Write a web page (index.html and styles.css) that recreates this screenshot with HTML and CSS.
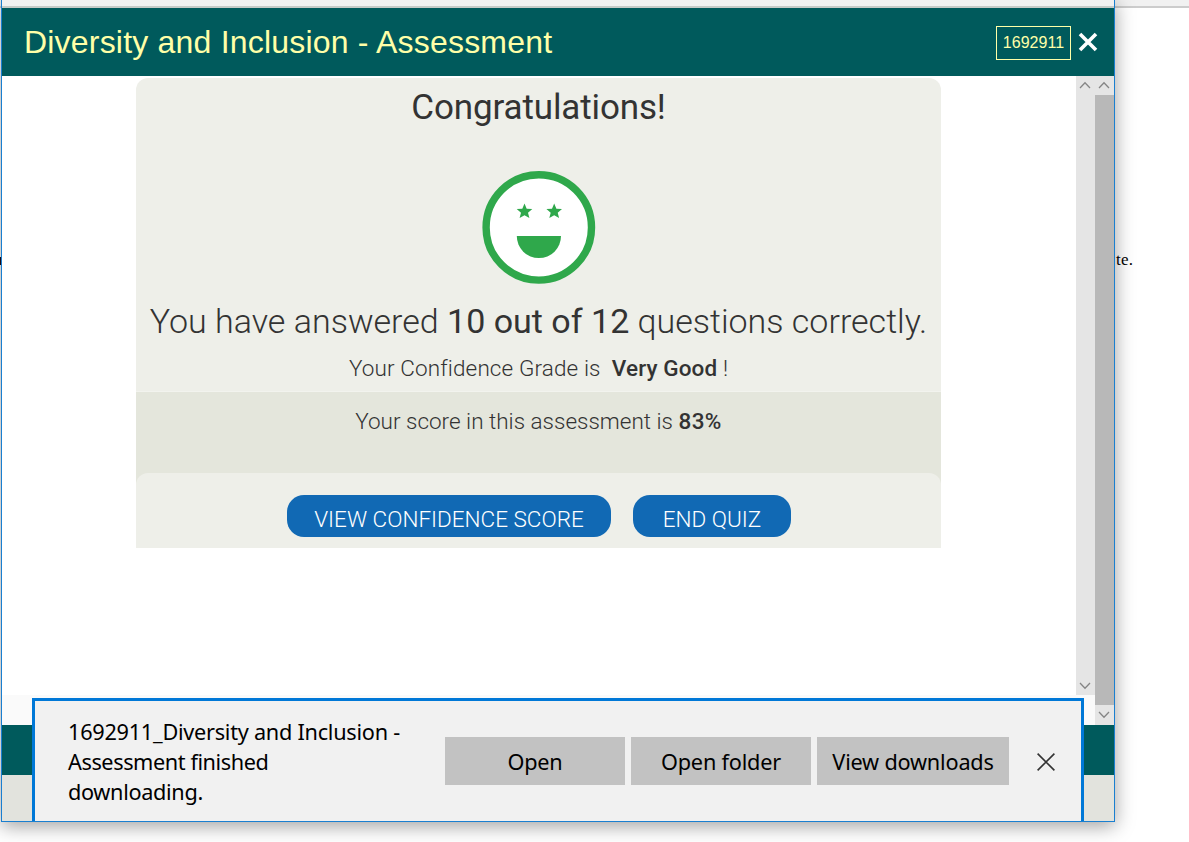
FILE: index.html
```html
<!DOCTYPE html>
<html lang="en">
<head>
<meta charset="utf-8">
<title>Diversity and Inclusion - Assessment</title>
<link rel="stylesheet" href="styles.css">
</head>
<body>
<div class="backdrop"><span class="backdrop-edge"></span><span class="backdrop-text">te.</span></div>
<div class="window">
  <div class="window-strip"></div>
  <header class="header">
    <h1 class="title"><span>Diversity and Inclusion - Assessment</span></h1>
    <div class="badge"><span>1692911</span></div>
    <svg class="header-close" width="20" height="20" viewBox="0 0 20 20"><path d="M2 2L18 18M18 2L2 18"/></svg>
  </header>
  <div class="viewport">
    <div class="frame">
      <div class="page">
        <main class="content">
          <section class="card">
            <h2 class="congrats"><span>Congratulations!</span></h2>
            <svg class="smiley" width="114" height="114" viewBox="0 0 114 114">
              <circle cx="56.8" cy="57.4" r="52.7" fill="#fff" stroke="#2fa84b" stroke-width="7.4"/>
              <path id="star" fill="#2fa84b" d="M42.5 33.5L44.7 38.7L50.3 39.1L46 42.7L47.4 48L42.5 45.2L37.6 48L39 42.7L34.7 39.1L40.3 38.7Z"/>
              <use href="#star" x="29.7"/>
              <path fill="#2fa84b" d="M34.8 66H79A22.1 22.1 0 0 1 34.8 66Z"/>
            </svg>
            <p class="answered"><span>You have answered <b>10 out of 12</b> questions correctly.</span></p>
            <p class="grade"><span>Your Confidence Grade is&nbsp; <b>Very Good</b> !</span></p>
            <div class="score"><span>Your score in this assessment is <b>83%</b></span></div>
            <div class="actions-wrap">
              <div class="actions">
                <button class="action action-view"><span>VIEW CONFIDENCE SCORE</span></button>
                <button class="action action-end"><span>END QUIZ</span></button>
              </div>
            </div>
          </section>
        </main>
        <div class="scrollbar">
          <svg width="12" height="8" viewBox="0 0 12 8"><path d="M1 7L6 1.8L11 7"/></svg>
          <svg width="12" height="8" viewBox="0 0 12 8"><path d="M1 1L6 6.2L11 1"/></svg>
        </div>
      </div>
      <div class="gap"></div>
    </div>
    <div class="scrollbar scrollbar-outer">
      <svg width="12" height="8" viewBox="0 0 12 8"><path d="M1 7L6 1.8L11 7"/></svg>
      <div class="thumb"></div>
      <svg width="12" height="8" viewBox="0 0 12 8"><path d="M1 1L6 6.2L11 1"/></svg>
    </div>
  </div>
  <div class="footer-bar"></div>
  <div class="footer-base"></div>
  <div class="toast">
    <p class="message"><span class="m1">1692911_Diversity and Inclusion -</span><br><span class="m2">Assessment finished</span><br><span class="m3">downloading.</span></p>
    <div class="toast-buttons">
      <button class="toast-button"><span>Open</span></button>
      <button class="toast-button"><span>Open folder</span></button>
      <button class="toast-button toast-wide"><span>View downloads</span></button>
    </div>
    <svg class="toast-close" width="20" height="20" viewBox="0 0 20 20"><path d="M1.6 1.6L18.4 18.4M18.4 1.6L1.6 18.4"/></svg>
  </div>
</div>
</body>
</html>
```
FILE: styles.css
```css
* { box-sizing: border-box; }
body { margin: 0; width: 1189px; height: 842px; overflow: hidden; background: #fff; position: relative; }
h1, h2, p { margin: 0; font-weight: 400; }
button { border: 0; padding: 0; }
svg { display: block; flex: none; }

.backdrop { height: 842px; background: linear-gradient(#f1f1f1 6px, #ccc 6px, #ccc 8px, #fff 8px); padding-top: 250px; display: flex; align-items: flex-start; }
.backdrop-edge { width: 1px; height: 8px; margin: 7px 1115px 0 0; background: #200a18; }
.backdrop-text { font: 17px/20px "Liberation Serif", serif; color: #000; letter-spacing: .2px; }

.window { position: absolute; left: 1px; top: -1px; width: 1114px; height: 823px; border: 1px solid #1a7fd0; background: #fff; display: flex; flex-direction: column; box-shadow: 0 4px 18px rgba(0,0,0,.38); }
.window-strip { height: 8px; flex: none; background: #f1f1f1; border-bottom: 2px solid #c6cbc8; }
.header { height: 68px; flex: none; background: #005a5c; display: flex; align-items: center; padding: 0 16px 0 22px; }
.title { flex: 1; font: 32px/40px "Liberation Sans", Arial, sans-serif; color: #ffffa8; white-space: nowrap; letter-spacing: .2px; }
.badge { width: 75px; height: 34px; margin-top: 2px; border: 1px solid #ffffa8; color: #ffffa8; font: 16px/32px "Liberation Sans", Arial, sans-serif; text-align: center; letter-spacing: .05px; }
.header-close { margin: 0 0 0 7px; stroke: #fff; stroke-width: 3.6; }

.viewport { height: 649px; flex: none; display: flex; }
.frame { flex: 1; display: flex; flex-direction: column; }
.page { height: 619px; display: flex; }
.gap { height: 30px; background: #fafafa; }
.content { flex: 1; padding: 2px 0 0 134px; }
.scrollbar { width: 19px; background: #e5e5e5; display: flex; flex-direction: column; align-items: flex-start; justify-content: space-between; padding: 5px 0; }
.scrollbar svg { margin-left: 3px; }
.scrollbar path { fill: none; stroke: #858585; stroke-width: 1.3; }
.scrollbar-outer { padding: 5px 0 6px; }
.thumb { width: 19px; height: 610px; background: #b8b8b8; }

.card { width: 805px; height: 470px; background: #eeefe9; border-radius: 12px 12px 0 0; font-family: Roboto, sans-serif; font-weight: 300; color: #333; display: flex; flex-direction: column; align-items: center; white-space: nowrap; }
.card p { font-weight: 300; }
.card b { font-weight: 500; }
.congrats { font-size: 35px; line-height: 42px; margin-top: 9px; letter-spacing: -.13px; }
.smiley { margin-top: 41px; }
.answered { font-size: 34px; line-height: 42px; margin-top: 16px; }
.card .answered b { font-weight: 400; }
.grade { font-size: 22.5px; line-height: 30px; margin-top: 11px; letter-spacing: .12px; }
.score { width: 805px; height: 82px; margin-top: 8px; background: #e4e6dc; border-top: 1px solid #f2f3ee; font-size: 22.5px; line-height: 30px; padding-top: 14px; text-align: center; }
.score b { letter-spacing: .4px; }
.actions-wrap { width: 805px; height: 74px; background: #e4e6dc; }
.actions { height: 74px; background: #eeefe9; border-radius: 12px 12px 0 0; padding: 22px 0 0 151px; display: flex; gap: 22px; }
.action { height: 42px; border-radius: 17px; background: #1169b4; color: #fff; font: 300 22.5px/30px Roboto, sans-serif; padding-top: 6px; }
.action-view { width: 324px; }
.action-end { width: 158px; }

.footer-bar { height: 50px; flex: none; background: #005a5c; }
.footer-base { flex: 1; background: #e2e3dd; }

.toast { position: absolute; left: 30px; top: 698px; width: 1052px; bottom: 0; border: 3px solid #0078d7; border-bottom: 0; background: #f1f1f1; display: flex; font: 21.7px/30px "Noto Sans", sans-serif; color: #000; }
.message { width: 410px; padding: 16px 0 0 33px; white-space: nowrap; }
.m1 { letter-spacing: -.26px; }
.m2 { letter-spacing: -.42px; }
.m3 { letter-spacing: -.33px; }
.toast-buttons { display: flex; gap: 6px; padding-top: 36px; }
.toast-button { width: 180px; height: 48px; padding-top: 2px; background: #c2c2c2; color: #000; font: 21.7px/30px "Noto Sans", sans-serif; letter-spacing: -.2px; white-space: nowrap; }
.toast-wide { width: 192px; }
.toast-close { margin: 51px 0 0 27px; stroke: #333; stroke-width: 1.6; }
```
